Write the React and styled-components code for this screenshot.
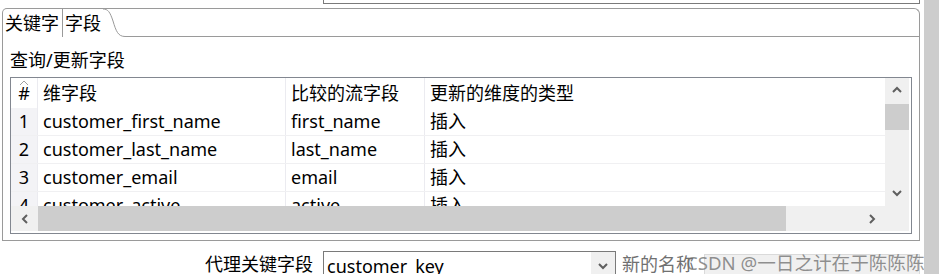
import React from "react";
import styled, { createGlobalStyle } from "styled-components";

const GlobalStyle = createGlobalStyle`
  html, body {
    margin: 0;
    padding: 0;
    background: #fff;
  }
  body {
    font-family: "Noto Sans", "Noto Sans CJK SC", sans-serif;
    font-size: 18px;
    color: #000;
  }
  * {
    box-sizing: border-box;
  }
`;

const Window = styled.div`
  display: flex;
  width: 939px;
  height: 274px;
  overflow: hidden;
`;

const Content = styled.div`
  width: 924px;
  display: flex;
  flex-direction: column;
  overflow: hidden;

  & > * {
    flex-shrink: 0;
  }
`;

const WindowScrollbar = styled.div`
  flex: 1;
  background: #cdcdcd;
`;

const ClippedField = styled.div`
  margin-left: 323px;
  width: 597px;
  height: 4px;
  border: 1px solid #7a7a7a;
  border-top: none;
`;

const TabFolder = styled.div`
  margin: 4px 0 0 2px;
  width: 918px;
  display: flex;
  flex-direction: column;
`;

const TabStrip = styled.div`
  display: flex;
  height: 29px;
  border: 1px solid #9a9a9a;
  border-bottom: none;
  border-radius: 5px 6px 0 0;
`;

const Tab = styled.div`
  display: flex;
  align-items: center;
  padding: 0 ${({ $active }) => ($active ? 2 : 3)}px 0 2px;
  border-right: ${({ $active }) => ($active ? "none" : "1px solid #9a9a9a")};
  line-height: 1;
  white-space: nowrap;
`;

const TabCurve = styled.svg`
  display: block;
  flex-shrink: 0;
`;

const TabFiller = styled.div`
  flex: 1;
  border-bottom: 1px solid #9a9a9a;
`;

const TabBody = styled.div`
  height: 204px;
  border: 1px solid #9a9a9a;
  border-top: none;
  padding: 11px 7px 0 7px;
`;

const SectionLabel = styled.div`
  line-height: 24px;
  height: 24px;
`;

const ListBox = styled.div`
  margin-top: 5px;
  width: 902px;
  height: 157px;
  border: 1px solid #828790;
  padding: 0 2px 2px 0;
  display: flex;
  flex-direction: column;
`;

const ListMain = styled.div`
  display: flex;
  height: 128px;
  flex-shrink: 0;
`;

const Grid = styled.div`
  flex: 1;
  overflow: hidden;
`;

const Row = styled.div`
  display: grid;
  grid-template-columns: 27px 248px 139px 1fr;
  height: ${({ $header }) => ($header ? 30 : 28)}px;
  border-bottom: ${({ $header }) => ($header ? "none" : "1px solid #f0f0f2")};
`;

const Cell = styled.div`
  position: relative;
  padding-left: ${({ $num }) => ($num ? 0 : 5)}px;
  text-align: ${({ $num }) => ($num ? "center" : "left")};
  background: ${({ $num, $header }) => ($num && !$header ? "#f3f3f6" : "transparent")};
  border-right: ${({ $last }) => ($last ? "none" : "1px solid #ebebf0")};
  line-height: ${({ $header }) => ($header ? 30 : 27)}px;
  white-space: nowrap;
  overflow: hidden;
`;

const SortCaret = styled.svg`
  position: absolute;
  left: 8px;
  top: 2px;
`;

const VScroll = styled.div`
  width: 24px;
  background: #f0f0f0;
  display: flex;
  flex-direction: column;
`;

const ScrollButton = styled.div`
  width: ${({ $w }) => $w || 24}px;
  height: ${({ $h }) => $h || 24}px;
  flex-shrink: 0;
  display: flex;
  align-items: center;
  justify-content: center;
`;

const Thumb = styled.div`
  background: #cdcdcd;
  flex-shrink: 0;
  width: ${({ $w }) => ($w ? `${$w}px` : "100%")};
  height: ${({ $h }) => ($h ? `${$h}px` : "100%")};
  margin-top: ${({ $mt }) => $mt || 0}px;
`;

const Spacer = styled.div`
  flex: 1;
`;

const HScroll = styled.div`
  display: flex;
  height: 25px;
  flex-shrink: 0;
  background: #f0f0f0;
`;

const BottomRow = styled.div`
  position: relative;
  display: flex;
  align-items: flex-start;
  padding-top: 10px;
`;

const FieldLabel = styled.div`
  width: 313px;
  text-align: right;
  line-height: 27px;
  white-space: nowrap;
`;

const Combo = styled.div`
  margin-left: 10px;
  width: 293px;
  height: 30px;
  border: 1px solid #7a7a7a;
  display: flex;
`;

const ComboText = styled.div`
  flex: 1;
  padding-left: 3px;
  line-height: 28px;
`;

const ComboButton = styled.div`
  width: 24px;
  background: #f0f0f0;
  display: flex;
  align-items: center;
  justify-content: center;
`;

const HintLabel = styled.div`
  margin-left: 6px;
  color: #707070;
  line-height: 26px;
  white-space: nowrap;
`;

const DisabledInput = styled.div`
  margin: 3px 0 0 10px;
  width: 216px;
  height: 30px;
  background: #f0f0f0;
  border: 1px solid #dadada;
`;

const Watermark = styled.div`
  position: absolute;
  left: 686px;
  top: 9px;
  font-size: 18.6px;
  line-height: 26px;
  color: rgba(110, 110, 110, 0.75);
  white-space: nowrap;
`;

const Chevron = ({ dir }) => {
  const paths = {
    up: "M1 6 L5 2 L9 6",
    down: "M1 2 L5 6 L9 2",
    left: "M6 1 L2 5 L6 9",
    right: "M2 1 L6 5 L2 9",
  };
  const horiz = dir === "up" || dir === "down";
  return (
    <svg width={horiz ? 10 : 8} height={horiz ? 8 : 10} viewBox={horiz ? "0 0 10 8" : "0 0 8 10"}>
      <path d={paths[dir]} fill="none" stroke="#5f5f5f" strokeWidth="2" />
    </svg>
  );
};

const rows = [
  ["1", "customer_first_name", "first_name", "插入"],
  ["2", "customer_last_name", "last_name", "插入"],
  ["3", "customer_email", "email", "插入"],
  ["4", "customer_active", "active", "插入"],
];

export default function App() {
  return (
    <>
      <GlobalStyle />
      <Window>
        <Content>
          <ClippedField />
          <TabFolder>
            <TabStrip>
              <Tab>关键字</Tab>
              <Tab $active>字段</Tab>
              <TabCurve width="22" height="28" viewBox="0 0 22 28">
                <path
                  d="M0 0 C5 0 7 3 10 12 C13 22 15 27.5 22 27.5"
                  fill="none"
                  stroke="#9a9a9a"
                  strokeWidth="1"
                />
              </TabCurve>
              <TabFiller />
            </TabStrip>
            <TabBody>
              <SectionLabel>查询/更新字段</SectionLabel>
              <ListBox>
                <ListMain>
                  <Grid>
                    <Row $header>
                      <Cell $num $header>
                        <SortCaret width="10" height="6" viewBox="0 0 10 6">
                          <path d="M1 5 L5 1 L9 5" fill="none" stroke="#a0a0a0" strokeWidth="1" />
                        </SortCaret>
                        #
                      </Cell>
                      <Cell $header>维字段</Cell>
                      <Cell $header>比较的流字段</Cell>
                      <Cell $header $last>更新的维度的类型</Cell>
                    </Row>
                    {rows.map((r) => (
                      <Row key={r[0]}>
                        <Cell $num>{r[0]}</Cell>
                        <Cell>{r[1]}</Cell>
                        <Cell>{r[2]}</Cell>
                        <Cell $last>{r[3]}</Cell>
                      </Row>
                    ))}
                  </Grid>
                  <VScroll>
                    <ScrollButton>
                      <Chevron dir="up" />
                    </ScrollButton>
                    <Thumb $h={26} $mt={2} />
                    <Spacer />
                    <ScrollButton $h={26}>
                      <Chevron dir="down" />
                    </ScrollButton>
                  </VScroll>
                </ListMain>
                <HScroll>
                  <ScrollButton $w={27} $h={25}>
                    <Chevron dir="left" />
                  </ScrollButton>
                  <Thumb $w={748} />
                  <Spacer />
                  <ScrollButton $w={26} $h={25}>
                    <Chevron dir="right" />
                  </ScrollButton>
                  <ScrollButton $w={24} $h={25} />
                </HScroll>
              </ListBox>
            </TabBody>
          </TabFolder>
          <BottomRow>
            <FieldLabel>代理关键字段</FieldLabel>
            <Combo>
              <ComboText>customer_key</ComboText>
              <ComboButton>
                <Chevron dir="down" />
              </ComboButton>
            </Combo>
            <HintLabel>新的名称</HintLabel>
            <DisabledInput />
            <Watermark>CSDN @一日之计在于陈陈陈</Watermark>
          </BottomRow>
        </Content>
        <WindowScrollbar />
      </Window>
    </>
  );
}
